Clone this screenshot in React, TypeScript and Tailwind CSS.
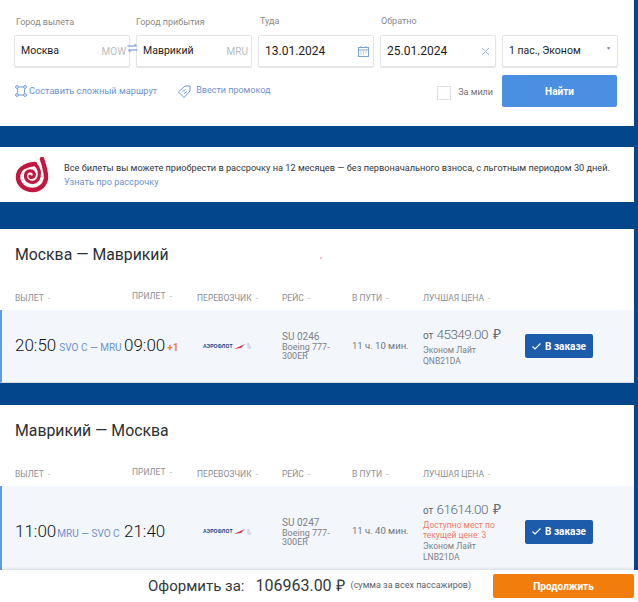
const Field = ({ label, value, code, labelClass, valueClass, children }: { label: string; value: string; code?: string; labelClass?: string; valueClass: string; children?: React.ReactNode }) => {
  return (
    <div className="w-[116px] shrink-0">
      <div className={`h-[13px] whitespace-nowrap text-[9px] leading-[13px] text-[#8a8a8a] ${labelClass ?? ""}`}>{label}</div>
      <div className="mt-[7px] flex h-[32px] items-center justify-between rounded-[2px] border border-[#e3e5e8] bg-white pl-[6px] pr-[3px] shadow-[0_1px_1px_rgba(0,0,0,0.1)]">
        <span className={`whitespace-nowrap text-[#1c1c1c] ${valueClass}`}>{value}</span>
        {code && <span className="text-[10px] text-[#b9bcc0]">{code}</span>}
        {children}
      </div>
    </div>
  );
};

const SwapIcon = () => (
  <svg width="11" height="10" viewBox="0 0 11 10" fill="none" stroke="#5b8fd6" strokeWidth="1" className="absolute left-[127px] top-[43px]">
    <path d="M0.500 3h9M7.500 1l2 2M10.500 7h-9M3.500 9l-2-2" />
  </svg>
);

const RouteIcon = () => (
  <svg width="12" height="12" viewBox="0 0 12 12" fill="none" stroke="#6d9bd8" strokeWidth="1" className="shrink-0">
    <circle cx="2" cy="2" r="1.400" />
    <circle cx="10" cy="2" r="1.400" />
    <circle cx="2" cy="10" r="1.400" />
    <circle cx="10" cy="10" r="1.400" />
    <path d="M3.500 2h5M2 3.500c.8 1.500.8 3.500 0 5M10 3.500c-.8 1.500-.8 3.500 0 5M3.500 10h5" />
  </svg>
);

const PromoIcon = () => (
  <svg width="13" height="13" viewBox="0 0 13 13" fill="none" stroke="#6d9bd8" strokeWidth="1" className="shrink-0">
    <path d="M7 1h5v5l-6 6.500L.5 7z" />
    <path d="M4.500 6.500l3-2M6 8.500l3-2" />
  </svg>
);

const CalendarIcon = () => (
  <svg width="11" height="11" viewBox="0 0 11 11" fill="none" stroke="#7ba6d8" strokeWidth="1" className="mr-[1px]">
    <rect x="0.500" y="1.500" width="10" height="9" />
    <path d="M0.500 4h10M3 0v2M8 0v2M2.500 6h1M5 6h1M7.500 6h1M2.500 8h1M5 8h1" />
  </svg>
);

const ClearIcon = () => (
  <svg width="9" height="9" viewBox="0 0 9 9" fill="none" stroke="#9dbbdc" strokeWidth="1" className="mr-[2px]">
    <path d="M1 1l7 7M8 1l-7 7" />
  </svg>
);

const SpiralLogo = () => (
  <svg width="34" height="36" viewBox="0 0 34 36" fill="none" className="shrink-0">
    <path
      d="M27 2C29 8 31 14 31 20C31 28 24 33 18 33C9 33 3 27 3 20C3 13 9 8 20 7"
      stroke="#c4173f"
      strokeWidth="4.500"
      strokeLinecap="round"
    />
    <path d="M20 7C24 11 25 16 24 20C23 25 17 27 13 24C9 21 10 15 14 14C18 13 20 16 19 19C18 21 15 21 15 19" stroke="#c4173f" strokeWidth="3.200" strokeLinecap="round" />
  </svg>
);

const AeroflotLogo = () => (
  <div className="flex items-center gap-[1px] pl-[6px]">
    <span className="whitespace-nowrap text-[5px] font-bold leading-none tracking-[0.1px] text-[#173f86] [font-family:'Liberation_Sans',sans-serif]">АЭРОФЛОТ</span>
    <svg width="12" height="5" viewBox="0 0 12 5">
      <path d="M0 5l11-5-4 4z" fill="#d0344a" />
    </svg>
    <svg width="5" height="6" viewBox="0 0 5 6" fill="none" stroke="#9fb2c8" strokeWidth="0.600">
      <path d="M1 0l3 5H1z" />
    </svg>
  </div>
);

const Ruble = () => <span className="[font-family:'Liberation_Sans',sans-serif]">₽</span>;

const HeadCell = ({ label, up }: { label: string; up?: boolean }) => (
  <div className={`whitespace-nowrap ${up ? "-mt-[2px]" : ""}`}>
    {label}<span className="ml-[4px] text-[#b5b9be]">-</span>
  </div>
);

const OrderButton = () => (
  <button className="flex h-[24px] w-[68px] items-center justify-center gap-[4px] rounded-[2px] bg-[#1c5cab] text-[10px] font-bold text-white">
    <svg width="9" height="7" viewBox="0 0 9 7" fill="none" stroke="white" strokeWidth="1.200">
      <path d="M0.500 3.500l2.500 2.500 5.500-5.500" />
    </svg>
    В заказе
  </button>
);

const Flight = ({
  title, from, route, to, plus, flight, duration, price, warning, fare, code, rowClass, routeClass,
}: {
  title: string; from: string; route: string; to: string; plus?: string; flight: string; duration: string; price: string; warning?: boolean; fare: string; code: string; rowClass: string; routeClass: string;
}) => (
  <section className="w-[634px] bg-white">
    <h2 className="flex h-[36px] items-end pl-[15px] text-[15.800px] leading-[20px] text-[#2b2f33]">{title}</h2>
    <div className="mt-[27px] grid h-[18px] grid-cols-[117px_65px_85px_70px_71px_102px] pl-[15px] text-[8.500px] uppercase text-[#8b9096]">
      <HeadCell label="Вылет" />
      <HeadCell label="Прилет" up />
      <HeadCell label="Перевозчик" />
      <HeadCell label="Рейс" />
      <HeadCell label="В пути" />
      <HeadCell label="Лучшая цена" />
    </div>
    <div className={`grid grid-cols-[109px_73px_85px_70px_71px_102px_auto] items-center border-l-2 border-[#5f9be3] bg-[#f3f7fc] pl-[13px] ${rowClass}`}>
      <div className="flex items-baseline whitespace-nowrap">
        <span className="text-[17px] font-light text-[#111417]">{from}</span>
        <span className={`text-[10px] text-[#6d92cf] ${routeClass}`}>{route}</span>
      </div>
      <div className="flex items-baseline whitespace-nowrap">
        <span className="text-[17px] font-light text-[#111417]">{to}</span>
        {plus && <span className="ml-[2px] text-[10px] font-bold text-[#e8832a]">{plus}</span>}
      </div>
      <AeroflotLogo />
      <div className="w-[56px] text-[#7b8188]">
        <div className="text-[10px] leading-[12px]">{flight}</div>
        <div className="text-[9px] leading-[9px]">Boeing 777-300ER</div>
      </div>
      <div className="whitespace-nowrap text-[9.500px] text-[#6f757c]">{duration}</div>
      <div>
        <div className="flex items-baseline whitespace-nowrap leading-[16px] text-[#5f6872]">
          <span className="text-[10px]">от</span>
          <span className="ml-[3px] text-[13.500px] font-light tracking-[-0.500px]">{price}</span>
          <span className="ml-[5px] text-[14px]"><Ruble /></span>
        </div>
        {warning && (
          <div className="mt-[1px] w-[80px] text-[8.500px] leading-[10px] text-[#ef7a66]">Доступно мест по текущей цене: 3</div>
        )}
        <div className="mt-[1px] whitespace-nowrap text-[8.500px] leading-[11px] text-[#7b8188]">{fare}</div>
        <div className="text-[8.500px] leading-[11px] text-[#7b8188]">{code}</div>
      </div>
      <OrderButton />
    </div>
  </section>
);

const App = () => {
  return (
    <div className="relative h-[602px] w-[638px] overflow-hidden bg-[#03468c] [font-family:Roboto,'Liberation_Sans',sans-serif]">
      {/* search form */}
      <section className="relative h-[126px] w-[634px] bg-white pl-[14px] pr-[17px] pt-[15px]">
        <div className="flex gap-[6px]">
          <Field label="Город вылета" value="Москва" code="MOW" labelClass="pl-[2px] pt-[1px]" valueClass="text-[10.500px]" />
          <Field label="Город прибытия" value="Маврикий" code="MRU" labelClass="pt-[1px]" valueClass="text-[10.500px]" />
          <Field label="Туда" value="13.01.2024" labelClass="pl-[2px]" valueClass="text-[12px]">
            <CalendarIcon />
          </Field>
          <Field label="Обратно" value="25.01.2024" labelClass="pl-[1px]" valueClass="text-[12px]">
            <ClearIcon />
          </Field>
          <Field label="" value="1 пас., Эконом" valueClass="text-[10.500px]">
            <span className="mb-[4px] mr-[3px] text-[5px] text-[#6f8196]">▼</span>
          </Field>
        </div>
        <SwapIcon />
        <div className="mt-[8px] flex items-center">
          <a className="ml-[1px] flex items-center gap-[2px] whitespace-nowrap text-[9.200px] text-[#6d93cf]">
            <RouteIcon />
            Составить сложный маршрут
          </a>
          <a className="ml-[21px] flex items-center gap-[5px] whitespace-nowrap text-[9px] text-[#6d93cf]">
            <PromoIcon />
            Ввести промокод
          </a>
          <label className="ml-auto mt-[3px] flex items-center gap-[7px] whitespace-nowrap text-[9px] text-[#6f6f6f]">
            <span className="h-[14px] w-[14px] border border-[#e0e0e0] bg-white" />
            За мили
          </label>
          <button className="ml-[9px] h-[32px] w-[115px] rounded-[2px] bg-[#4b8fe2] text-[10px] font-bold text-white">Найти</button>
        </div>
      </section>

      {/* installment banner */}
      <section className="mt-[21px] flex h-[55px] w-[634px] items-center gap-[15px] bg-white pl-[15px]">
        <SpiralLogo />
        <div>
          <p className="whitespace-nowrap text-[9.200px] leading-[14px] text-[#33383d]">Все билеты вы можете приобрести в рассрочку на 12 месяцев — без первоначального взноса, с льготным периодом 30 дней.</p>
          <a className="block text-[9.200px] leading-[14px] text-[#6d93cf]">Узнать про рассрочку</a>
        </div>
      </section>

      <div className="mt-[27px]">
        <Flight
          title="Москва — Маврикий"
          from="20:50"
          route="SVO C — MRU"
          routeClass="ml-[3px]"
          to="09:00"
          plus="+1"
          flight="SU 0246"
          duration="11 ч. 10 мин."
          price="45349.00"
          fare="Эконом Лайт"
          code="QNB21DA"
          rowClass="h-[73px] border-b border-b-[#d5d8dc]"
        />
      </div>

      <div className="mt-[22px]">
        <Flight
          title="Маврикий — Москва"
          from="11:00"
          route="MRU — SVO C"
          routeClass="ml-[1px]"
          to="21:40"
          flight="SU 0247"
          duration="11 ч. 40 мин."
          price="61614.00"
          warning
          fare="Эконом Лайт"
          code="LNB21DA"
          rowClass="h-[91px]"
        />
      </div>

      <span className="absolute left-[320px] top-[257px] h-[2px] w-[2px] rounded-full bg-[#f4a6b8]" />

      {/* sticky total bar */}
      <footer className="absolute bottom-0 left-0 flex h-[32px] w-[638px] items-center whitespace-nowrap bg-white pl-[148px] pr-[4px] shadow-[0_-1px_3px_rgba(0,0,0,0.12)]">
        <span className="text-[15px] text-[#33383d]">Оформить за:</span>
        <span className="ml-[11px] text-[16px] text-[#33383d]">106963.00 <Ruble /></span>
        <span className="ml-[6px] text-[9px] text-[#5f6368]">(сумма за всех пассажиров)</span>
        <button className="ml-auto h-[24px] w-[141px] rounded-[2px] bg-[#f27d0c] text-[10px] font-bold text-white">Продолжить</button>
      </footer>
    </div>
  );
};

export default App;
